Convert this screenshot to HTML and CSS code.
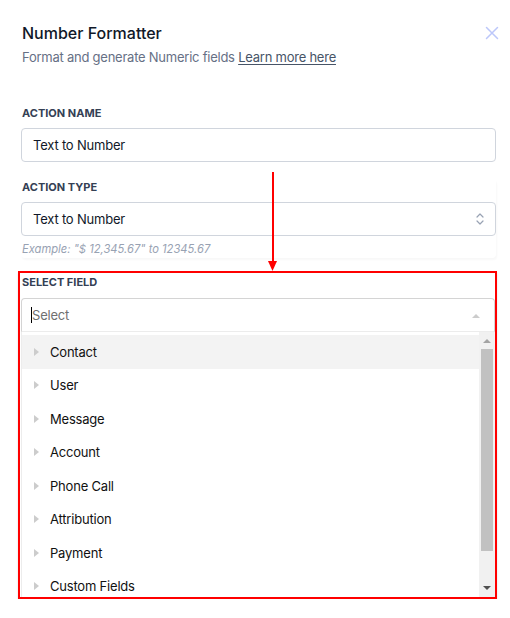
FILE: index.html
```html
<!DOCTYPE html>
<html>
<head>
<meta charset="utf-8">
<link rel="stylesheet" href="styles.css">
</head>
<body>
<div class="panel">
  <div class="header">
    <h1 class="title">Number Formatter</h1>
    <svg class="close" width="14" height="14" viewBox="0 0 14 14"><path d="M1.5 1.5L12.5 12.5M12.5 1.5L1.5 12.5" stroke="#bcc7fa" stroke-width="1.5" fill="none" stroke-linecap="round"/></svg>
  </div>
  <p class="subtitle">Format and generate Numeric fields <a class="link">Learn more here</a></p>

  <div class="field field-name">
    <div class="label">ACTION NAME</div>
    <div class="input">Text to Number</div>
  </div>

  <div class="field field-type">
    <div class="label">ACTION TYPE</div>
    <div class="input select">
      <span>Text to Number</span>
      <svg width="10" height="14" viewBox="0 0 10 14"><path d="M2 5L5 2L8 5M2 9L5 12L8 9" stroke="#98a2b3" stroke-width="1.2" fill="none" stroke-linecap="round" stroke-linejoin="round"/></svg>
    </div>
    <div class="help">Example: "$ 12,345.67" to 12345.67</div>
  </div>

  <div class="highlight">
    <div class="label">SELECT FIELD</div>
    <div class="input open">
      <span class="caret"></span><span class="placeholder">Select</span>
      <svg class="up" width="8" height="5" viewBox="0 0 8 5"><path d="M0 5L4 1L8 5Z" fill="#cccccc"/></svg>
    </div>
    <div class="dropdown">
      <ul class="items">
        <li class="item active"><span class="tri"></span>Contact</li>
        <li class="item"><span class="tri"></span>User</li>
        <li class="item"><span class="tri"></span>Message</li>
        <li class="item"><span class="tri"></span>Account</li>
        <li class="item"><span class="tri"></span>Phone Call</li>
        <li class="item"><span class="tri"></span>Attribution</li>
        <li class="item"><span class="tri"></span>Payment</li>
        <li class="item"><span class="tri"></span>Custom Fields</li>
      </ul>
      <div class="scrollbar">
        <div class="sb-btn"><svg width="8" height="5" viewBox="0 0 8 5"><path d="M0 5L4 1L8 5Z" fill="#a3a3a3"/></svg></div>
        <div class="thumb"></div>
        <div class="track"></div>
        <div class="sb-btn"><svg width="8" height="5" viewBox="0 0 8 5"><path d="M0 0L8 0L4 4Z" fill="#505050"/></svg></div>
      </div>
    </div>
  </div>

  <div class="arrow">
    <div class="arrow-line"></div>
    <svg class="arrow-head" width="9" height="10" viewBox="0 0 9 10"><path d="M0 0L9 0L4.5 10Z" fill="#ff0000"/></svg>
  </div>
</div>
</body>
</html>
```

FILE: styles.css
```css
* { box-sizing: border-box; }
html, body { margin: 0; padding: 0; background: #ffffff; }
body { font-family: Inter, "Noto Sans", sans-serif; color: #101828; }

.panel {
  position: relative;
  width: 510px;
  padding: 21px 14px 0 21px;
}

.header {
  display: flex;
  justify-content: space-between;
  align-items: flex-start;
}
.title {
  margin: 0 0 0 1px;
  font-size: 16px;
  line-height: 24px;
  font-weight: 500;
  color: #101828;
}
.close { margin-top: 5px; margin-right: -3px; }

.subtitle {
  margin: 2px 0 0 1px;
  font-size: 13px;
  letter-spacing: -0.24px;
  line-height: 20px;
  color: #667085;
}
.link { color: #475467; text-decoration: underline; text-underline-offset: 2px; }

.label {
  font-size: 11px;
  line-height: 16px;
  font-weight: 700;
  color: #344054;
  margin-left: 1px;
}

.field-name { margin-top: 38px; }
.field-type { margin-top: 17px; box-shadow: 1px 2px 2px rgba(0,0,0,0.03); border-radius: 4px; padding-bottom: 2px; }

.input {
  margin-top: 7px;
  height: 34px;
  border: 1px solid #d0d5dd;
  border-radius: 4px;
  display: flex;
  align-items: center;
  padding: 0 11px;
  font-size: 13px;
  letter-spacing: -0.2px;
  color: #101828;
}
.select { justify-content: space-between; padding-right: 10px; }

.help {
  margin-top: 6px;
  margin-left: 1px;
  font-size: 11.2px;
  line-height: 14px;
  font-style: italic;
  color: #98a2b3;
}

.highlight {
  margin-top: 13px;
  margin-left: -3px;
  width: 479px;
  border: 2px solid #ff0000;
  padding: 2px 0 0 1px;
  height: 328px;
  display: flex;
  flex-direction: column;
  overflow: hidden;
  box-shadow: 0 2px 2px rgba(0,0,0,0.12);
}
.highlight .label { margin-left: 1px; line-height: 14px; }

.open {
  margin-top: 9px;
  border-color: #d4d4d4;
  border-bottom: 1px solid #ececec;
  border-radius: 4px 4px 0 0;
  padding-left: 9px;
  padding-right: 14px;
  height: 34px;
  flex: none;
}
.caret {
  display: inline-block;
  width: 1px;
  height: 16px;
  background: #000;
}
.placeholder { color: #707070; flex: 1; }

.dropdown {
  flex: 1;
  display: flex;
  min-height: 0;
  border-left: 1px solid #ececec;
}
.items {
  list-style: none;
  margin: 0;
  padding: 3px 0 0 0;
  flex: 1;
}
.item {
  height: 33.5px;
  display: flex;
  align-items: center;
  padding-left: 12px;
  font-size: 13px;
  letter-spacing: -0.2px;
  color: #111111;
}
.item.active { background: #f3f3f3; }
.tri {
  width: 0;
  height: 0;
  border-top: 4px solid transparent;
  border-bottom: 4px solid transparent;
  border-left: 5px solid #cccccc;
  margin-right: 11px;
}

.scrollbar {
  width: 16px;
  flex: none;
  background: #f1f1f1;
  display: flex;
  flex-direction: column;
}
.sb-btn {
  height: 17px;
  display: flex;
  align-items: center;
  justify-content: center;
  flex: none;
}
.thumb {
  height: 202px;
  margin: 0 2px;
  background: #c1c1c1;
  flex: none;
}
.track { flex: 1; }

.arrow {
  position: absolute;
  left: 268px;
  top: 172px;
  width: 9px;
  display: flex;
  flex-direction: column;
  align-items: center;
}
.arrow-line { width: 2px; height: 89px; background: #ff0000; }
.arrow-head { display: block; }
```
